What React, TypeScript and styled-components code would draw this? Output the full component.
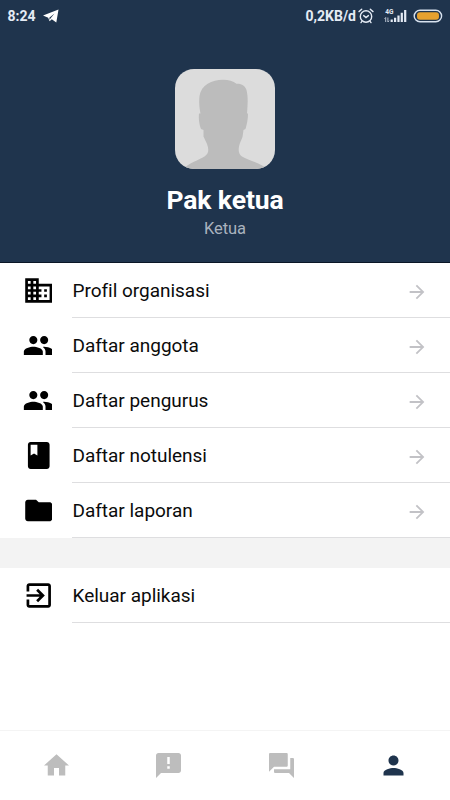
import React from "react";
import styled, { createGlobalStyle } from "styled-components";

const GlobalStyle = createGlobalStyle`
  * { box-sizing: border-box; }
  body { margin: 0; background: #fff; font-family: Roboto, "Liberation Sans", sans-serif; }
`;

const Screen = styled.div`
  width: 450px;
  height: 800px;
  display: flex;
  flex-direction: column;
  background: #fff;
  overflow: hidden;
`;

const Header = styled.header`
  height: 263px;
  flex: none;
  background: #1f344d;
  border-bottom: 1px solid #0a1626;
  display: flex;
  flex-direction: column;
  align-items: center;
`;

const StatusBar = styled.div`
  width: 100%;
  height: 32px;
  padding: 0 7px 0 7.5px;
  display: flex;
  justify-content: space-between;
  align-items: center;
  color: #e4ebf5;
`;

const StatusGroup = styled.div`
  display: flex;
  align-items: center;
`;

const StatusText = styled.span`
  font-size: 14px;
  font-weight: 700;
  line-height: 32px;
`;

const StatusIcon = styled.svg<{ $gap: number }>`
  display: block;
  margin-left: ${(p) => p.$gap}px;
`;

const Avatar = styled.svg`
  display: block;
  width: 100px;
  height: 100px;
  margin-top: 36.5px;
  border-radius: 19px;
  background: #dcdcdc;
`;

const Name = styled.h1`
  margin: 15.5px 0 0;
  font-size: 26.5px;
  font-weight: 700;
  line-height: 32px;
  letter-spacing: -0.1px;
  color: #fff;
`;

const Role = styled.div`
  margin-top: 2px;
  font-size: 16.5px;
  line-height: 21px;
  letter-spacing: -0.1px;
  color: #a9b2be;
`;

const Menu = styled.nav`
  flex: none;
`;

const MenuRow = styled.div`
  height: 55px;
  display: flex;
  padding-left: 22px;
`;

const MenuIcon = styled.span`
  width: 29.5px;
  margin-right: 20.5px;
  display: flex;
  align-items: center;
  overflow: hidden;
  color: #000;
`;

const MenuBody = styled.div`
  flex: 1;
  display: flex;
  align-items: center;
  justify-content: space-between;
  padding: 2px 22px 0 0.5px;
  border-bottom: 1px solid #dedee0;
  color: #c2c2c6;
`;

const Label = styled.span`
  font-size: 19px;
  line-height: 24px;
  letter-spacing: -0.02px;
  color: #0b0b0b;
`;

const RowArrow = styled.span`
  display: flex;
  padding-top: 2px;
`;

const Divider = styled.div`
  height: 30px;
  background: #f3f3f3;
`;

const TabBar = styled.nav`
  height: 70px;
  margin-top: auto;
  border-top: 1px solid #f4f4f4;
  display: grid;
  grid-template-columns: repeat(4, 1fr);
`;

const Tab = styled.div<{ $active?: boolean }>`
  display: flex;
  align-items: center;
  justify-content: center;
  color: ${(p) => (p.$active ? "#1f344d" : "#bdbdbd")};
`;

const Glyph = styled.svg`
  display: block;
  flex: none;
  fill: currentColor;
`;

const icons = {
  business:
    "M12 7V3H2v18h20V7H12zM6 19H4v-2h2v2zm0-4H4v-2h2v2zm0-4H4V9h2v2zm0-4H4V5h2v2zm4 12H8v-2h2v2zm0-4H8v-2h2v2zm0-4H8V9h2v2zm0-4H8V5h2v2zm10 12h-8v-2h2v-2h-2v-2h2v-2h-2V9h8v10zm-2-8h-2v2h2v-2zm0 4h-2v2h2v-2z",
  people:
    "M16 11c1.66 0 2.99-1.34 2.99-3S17.66 5 16 5s-3 1.34-3 3 1.34 3 3 3zm-8 0c1.66 0 2.99-1.34 2.99-3S9.66 5 8 5 5 6.34 5 8s1.34 3 3 3zm0 2c-2.33 0-7 1.17-7 3.5V19h14v-2.5c0-2.33-4.67-3.5-7-3.5zm8 0c-.29 0-.62.02-.97.05 1.16.84 1.97 1.97 1.97 3.45V19h6v-2.5c0-2.33-4.67-3.5-7-3.5z",
  book: "M18 2H6c-1.1 0-2 .9-2 2v16c0 1.1.9 2 2 2h12c1.1 0 2-.9 2-2V4c0-1.1-.9-2-2-2zM6 4h5v8l-2.5-1.5L6 12V4z",
  folder:
    "M10 4H4c-1.1 0-1.99.9-1.99 2L2 18c0 1.1.9 2 2 2h16c1.1 0 2-.9 2-2V8c0-1.1-.9-2-2-2h-8l-2-2z",
  exit: "M10.09 15.59L11.5 17l5-5-5-5-1.41 1.41L12.67 11H3v2h9.67l-2.58 2.59zM19 3H5c-1.11 0-2 .9-2 2v4h2V5h14v14H5v-4H3v4c0 1.1.89 2 2 2h14c1.1 0 2-.9 2-2V5c0-1.1-.9-2-2-2z",
  arrow: "M12 4l-1.41 1.41L16.17 11H4v2h12.17l-5.58 5.59L12 20l8-8z",
  home: "M10 20v-6h4v6h5v-8h3L12 3 2 12h3v8z",
  feedback:
    "M20 2H4c-1.1 0-1.99.9-1.99 2L2 22l4-4h14c1.1 0 2-.9 2-2V4c0-1.1-.9-2-2-2zm-7 12.600h-2v-2h2v2zm0-3.800h-2V5.200h2v5.600z",
  chat: "M21 6h-2v9H6v2c0 .55.45 1 1 1h11l4 4V7c0-.55-.45-1-1-1zm-4 6V3c0-.55-.45-1-1-1H3c-.55 0-1 .45-1 1v14l4-4h10c.55 0 1-.45 1-1z",
  person:
    "M12 12c2.210 0 4-1.790 4-4s-1.790-4-4-4-4 1.790-4 4 1.790 4 4 4zm0 2c-2.670 0-8 1.340-8 4v2h16v-2c0-2.660-5.330-4-8-4z",
};

type IconName = keyof typeof icons;

const Icon = ({ name, size, viewBox = "0 0 24 24" }: { name: IconName; size: number; viewBox?: string }) => (
  <Glyph viewBox={viewBox} width={size} height={size}>
    <path d={icons[name]} />
  </Glyph>
);

const Item = ({ icon, label, arrow }: { icon: IconName; label: string; arrow?: boolean }) => (
  <MenuRow>
    <MenuIcon>
      <Icon name={icon} size={33} viewBox="-0.37 -0.18 24.37 24.37" />
    </MenuIcon>
    <MenuBody>
      <Label>{label}</Label>
      {arrow && (
        <RowArrow>
          <Icon name="arrow" size={22} />
        </RowArrow>
      )}
    </MenuBody>
  </MenuRow>
);

const items: { icon: IconName; label: string }[] = [
  { icon: "business", label: "Profil organisasi" },
  { icon: "people", label: "Daftar anggota" },
  { icon: "people", label: "Daftar pengurus" },
  { icon: "book", label: "Daftar notulensi" },
  { icon: "folder", label: "Daftar laporan" },
];

const tabs: IconName[] = ["home", "feedback", "chat", "person"];

export default function App() {
  return (
    <Screen>
      <GlobalStyle />
      <Header>
        <StatusBar>
          <StatusGroup>
            <StatusText>8:24</StatusText>
            <StatusIcon $gap={7} width="16" height="14" viewBox="0 0 16 14">
              <path d="M0 6.600L15.500 0.500 13.300 13.500 8.800 10.300 6.600 12.300 5.200 8.700z" fill="#fff" />
              <path d="M6.300 8.700L11.500 4.400 7.600 9.200 6.700 11z" fill="#1f344d" />
            </StatusIcon>
          </StatusGroup>
          <StatusGroup>
            <StatusText>0,2KB/d</StatusText>
            <StatusIcon $gap={2} width="16" height="16" viewBox="0 0 16 16" fill="none" stroke="#e4ebf5" strokeWidth="1.400" strokeLinecap="round">
              <circle cx="8" cy="8.500" r="5.700" />
              <path d="M1 3.600L3.700 1.300M15 3.600L12.300 1.300M5.700 7.600L8 9.500 10.400 7.600M3.900 13.400L3 14.600M12.100 13.400L13 14.600" />
            </StatusIcon>
            <StatusIcon $gap={10} width="25" height="16" viewBox="0 0 25 16">
              <text x="1.200" y="5.600" fontSize="6.500" fontWeight="700" fill="#e4ebf5">4G</text>
              <path d="M1.700 9.500V14M0.500 10.800L1.700 9.500M3.900 9.500V14M5.100 12.700L3.900 14" stroke="#c4cedb" strokeWidth="0.900" fill="none" />
              <path d="M6.600 11.500h2.200V14H6.600zM10 9.800h2.200V14H10zM13.400 7.600h2.200V14h-2.200zM16.700 4.800h2.200V14h-2.200zM20.100 2h2.200v12h-2.200z" fill="#e4ebf5" />
            </StatusIcon>
            <StatusIcon $gap={4} width="30" height="14" viewBox="0 0 30 14">
              <rect x="1.200" y="1.200" width="27.400" height="11.600" rx="5.800" fill="none" stroke="#d8e2ef" strokeWidth="1.400" />
              <rect x="4" y="3.200" width="22" height="7.600" rx="3" fill="#e6a12f" />
            </StatusIcon>
          </StatusGroup>
        </StatusBar>
        <Avatar viewBox="0 0 100 100">
          <path
            fill="#bcbcbc"
            d="M8 100C14 94 24 91 29.500 87.500C34 84.500 34 80 32 75L28.500 67.500V61L26 60C24 55 23.500 49 24 44.500L25.500 44.500C24 38 24 32 24.500 27C26 16 37 10.700 48 10.700C54 10.700 58 12 61.500 14.800C67 14.500 70 17 71.500 21C73.500 29 72.500 37 72 44.500H73C73 50 72 55 70.500 60L68.500 61L67.500 68L65 74C63 80 63 84.500 67 87.500C73 91 85 94 93 100Z"
          />
        </Avatar>
        <Name>Pak ketua</Name>
        <Role>Ketua</Role>
      </Header>
      <Menu>
        {items.map((item) => (
          <Item key={item.label} icon={item.icon} label={item.label} arrow />
        ))}
        <Divider />
        <Item icon="exit" label="Keluar aplikasi" />
      </Menu>
      <TabBar>
        {tabs.map((name) => (
          <Tab key={name} $active={name === "person"}>
            <Icon name={name} size={31} viewBox="-0.4 -0.4 24.8 24.8" />
          </Tab>
        ))}
      </TabBar>
    </Screen>
  );
}
